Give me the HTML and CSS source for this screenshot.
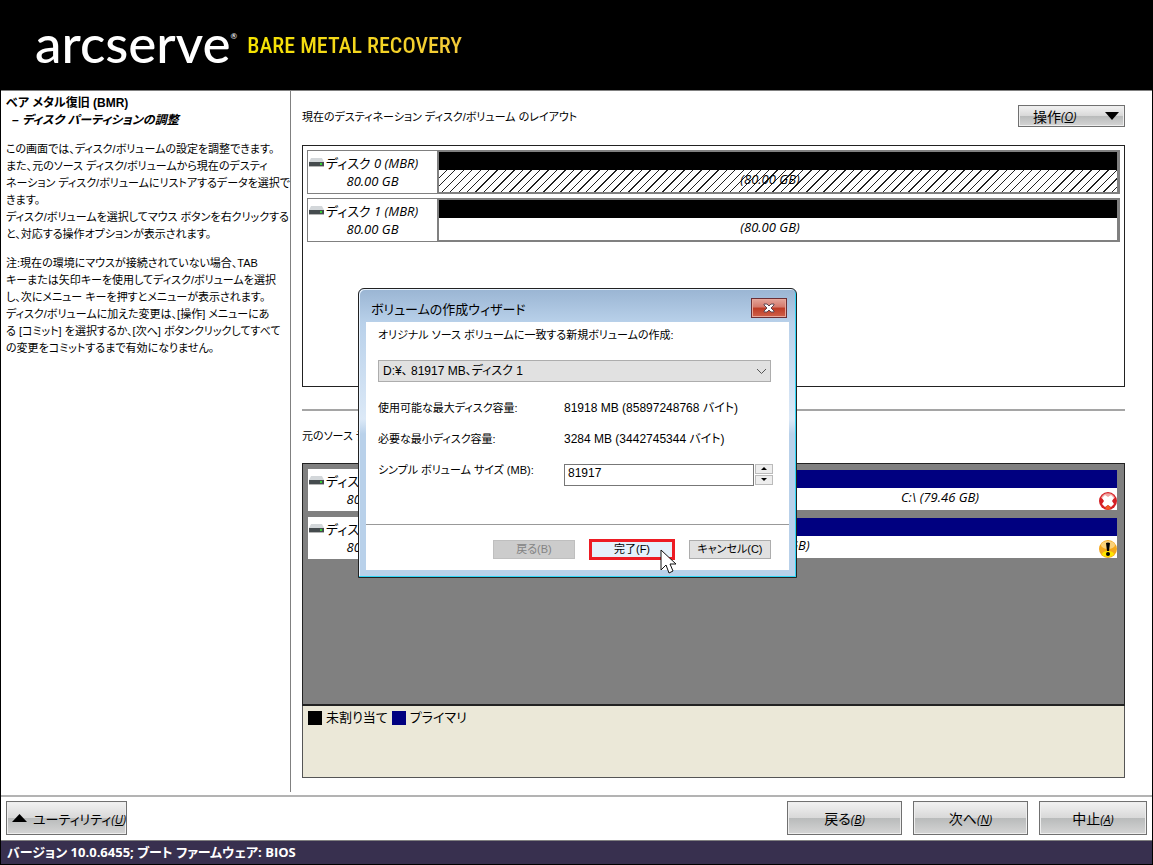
FILE: index.html
```html
<!DOCTYPE html>
<html lang="ja">
<head>
    <meta charset="UTF-8">
    <meta name="viewport" content="width=device-width, initial-scale=1.0">
    <title>Bare Metal Recovery</title>
    <link rel="stylesheet" href="styles.css">
</head>
<body>
    <div class="app">
        <header class="header">
            <span class="logo">arcserve<sup>®</sup></span>
            <h1 class="product">BARE METAL RECOVERY</h1>
        </header>

        <div class="content">
            <aside class="sidebar">
                <h2>ベア メタル復旧 (BMR)</h2>
                <h3>– ディスク パーティションの調整</h3>
                <p>この画面では、ディスク/ボリュームの設定を調整できます。<br>
                また、元のソース ディスク/ボリュームから現在のデスティ<br>
                ネーション ディスク/ボリュームにリストアするデータを選択で<br>
                きます。<br>
                ディスク/ボリュームを選択してマウス ボタンを右クリックする<br>
                と、対応する操作オプションが表示されます。</p>
                <p>注:現在の環境にマウスが接続されていない場合、TAB<br>
                キーまたは矢印キーを使用してディスク/ボリュームを選択<br>
                し、次にメニュー キーを押すとメニューが表示されます。<br>
                ディスク/ボリュームに加えた変更は、[操作] メニューにあ<br>
                る [コミット] を選択するか、[次へ] ボタンクリックしてすべて<br>
                の変更をコミットするまで有効になりません。</p>
            </aside>

            <main class="main">
                <div class="main-head">
                    <span>現在のデスティネーション ディスク/ボリューム のレイアウト</span>
                    <button class="btn btn-menu">操作<i>(<u>O</u>)</i>
                        <svg width="14" height="8" viewBox="0 0 14 8"><path d="M0 0h14L7 8z"/></svg>
                    </button>
                </div>

                <section class="panel">
                    <div class="disk">
                        <div class="disk-label">
                            <div class="disk-name">
                                <svg width="15" height="10" viewBox="0 0 15 10"><path d="M2 0h11l2 4H0z" fill="#d3d7da"/><path d="M0 4h15v4H0z" fill="#454b4e"/><path d="M0 8h15v1H0z" fill="#b5b5b5"/><path d="M11 5h2v2h-2z" fill="#35d232"/></svg>
                                <span>ディスク <i>0 (MBR)</i></span>
                            </div>
                            <div class="disk-size">80.00 GB</div>
                        </div>
                        <div class="volume selected">(80.00 GB)</div>
                    </div>
                    <div class="disk">
                        <div class="disk-label">
                            <div class="disk-name">
                                <svg width="15" height="10" viewBox="0 0 15 10"><path d="M2 0h11l2 4H0z" fill="#d3d7da"/><path d="M0 4h15v4H0z" fill="#454b4e"/><path d="M0 8h15v1H0z" fill="#b5b5b5"/><path d="M11 5h2v2h-2z" fill="#35d232"/></svg>
                                <span>ディスク <i>1 (MBR)</i></span>
                            </div>
                            <div class="disk-size">80.00 GB</div>
                        </div>
                        <div class="volume">(80.00 GB)</div>
                    </div>
                </section>

                <hr class="divider">

                <div class="source-title">元のソース ディスク/ボリューム</div>

                <section class="panel source">
                    <div class="disk">
                        <div class="disk-label">
                            <div class="disk-name">
                                <svg width="15" height="10" viewBox="0 0 15 10"><path d="M2 0h11l2 4H0z" fill="#d3d7da"/><path d="M0 4h15v4H0z" fill="#454b4e"/><path d="M0 8h15v1H0z" fill="#b5b5b5"/><path d="M11 5h2v2h-2z" fill="#35d232"/></svg>
                                <span>ディスク <i>0 (MBR)</i></span>
                            </div>
                            <div class="disk-size">80.00 GB</div>
                        </div>
                        <div class="volume primary small"></div>
                        <div class="volume primary">C:\ (79.46 GB)
                            <svg class="badge" width="18" height="18" viewBox="0 0 18 18"><circle cx="9" cy="9" r="9" fill="#d51f25"/><path d="M2 6a7.500 7.500 0 0 1 14 0Q9 9 2 6z" fill="#f0a5a2"/><path d="M6 3l3 2 3-2 3 3-2 3 2 3-3 3-3-2-3 2-3-3 2-3-2-3z" fill="#fff"/><path d="M6 16l3-3 3 3-3 2z" fill="#f15a24"/></svg>
                        </div>
                    </div>
                    <div class="disk">
                        <div class="disk-label">
                            <div class="disk-name">
                                <svg width="15" height="10" viewBox="0 0 15 10"><path d="M2 0h11l2 4H0z" fill="#d3d7da"/><path d="M0 4h15v4H0z" fill="#454b4e"/><path d="M0 8h15v1H0z" fill="#b5b5b5"/><path d="M11 5h2v2h-2z" fill="#35d232"/></svg>
                                <span>ディスク <i>1 (MBR)</i></span>
                            </div>
                            <div class="disk-size">80.00 GB</div>
                        </div>
                        <div class="volume primary">D:\ (80.00 GB)
                            <svg class="badge" width="18" height="18" viewBox="0 0 18 18"><circle cx="9" cy="9" r="9" fill="#f5a81c"/><ellipse cx="9" cy="5" rx="7" ry="4" fill="#fbd27a"/><ellipse cx="9" cy="14" rx="6" ry="3" fill="#ffe600"/><path d="M7 3q2-1 4 0l-1 8H8z"/><circle cx="9" cy="14" r="2"/></svg>
                        </div>
                    </div>
                </section>
                <div class="legend">
                    <span class="swatch"></span>未割り当て
                    <span class="swatch primary-swatch"></span>プライマリ
                </div>
            </main>
        </div>

        <footer class="toolbar">
            <button class="btn btn-util">
                <svg width="15" height="8" viewBox="0 0 15 8"><path d="M0 8h15L7.500 0z"/></svg>
                <span>ユーティリティ<i>(<u>U</u>)</i></span>
            </button>
            <div class="nav">
                <button class="btn">戻る<i>(<u>B</u>)</i></button>
                <button class="btn">次へ<i>(<u>N</u>)</i></button>
                <button class="btn btn-abort">中止<i>(<u>A</u>)</i></button>
            </div>
        </footer>
        <div class="status">バージョン 10.0.6455; ブート ファームウェア: BIOS</div>
    </div>

    <div class="dialog" role="dialog" aria-labelledby="dialogTitle">
        <div class="dialog-head">
            <span id="dialogTitle">ボリュームの作成ウィザード</span>
            <button class="close" aria-label="閉じる">
                <svg width="12" height="10" viewBox="0 0 12 10"><path d="M1 1h3l2 2 2-2h3v1L8 5l3 3v1H8L6 7 4 9H1V8l3-3-3-3z" fill="#fff" stroke="#5e4650"/></svg>
            </button>
        </div>
        <div class="dialog-body">
            <label for="volume">オリジナル ソース ボリュームに一致する新規ボリュームの作成:</label>
            <div class="select">
                <select id="volume">
                    <option>D:¥、 81917 MB、ディスク 1</option>
                </select>
                <svg width="11" height="7" viewBox="0 0 11 7"><path d="M1 1l4.500 4.500L10 1" fill="none" stroke="#555"/></svg>
            </div>
            <div class="fields">
                <span>使用可能な最大ディスク容量:</span>
                <span class="value">81918 MB (85897248768 バイト)</span>
                <span>必要な最小ディスク容量:</span>
                <span class="value">3284 MB (3442745344 バイト)</span>
                <label for="size">シンプル ボリューム サイズ (MB):</label>
                <div class="spinner">
                    <input type="text" id="size" value="81917">
                    <div class="spin-buttons">
                        <button aria-label="増やす"><svg width="6" height="3" viewBox="0 0 6 3"><path d="M0 3h6L3 0z"/></svg></button>
                        <button aria-label="減らす"><svg width="6" height="3" viewBox="0 0 6 3"><path d="M0 0h6L3 3z"/></svg></button>
                    </div>
                </div>
            </div>
            <div class="dialog-foot">
                <button disabled>戻る(B)</button>
                <div class="finish">
                    <button class="active">完了(F)</button>
                    <svg class="cursor" width="18" height="26" viewBox="0 0 18 26"><path d="M2 1v20l5-5 3 8 4-2-3-7h6z" fill="#fff" stroke="#111"/></svg>
                </div>
                <button>キャンセル(C)</button>
            </div>
        </div>
    </div>
</body>
</html>
```
FILE: styles.css
```css
* {
    box-sizing: border-box;
}

body {
    margin: 0;
    font-family: "Liberation Sans", "Noto Sans CJK JP", sans-serif;
    font-size: 11px;
    font-feature-settings: "palt";
    color: #000;
    background-color: #fff;
    white-space: nowrap;
}

button,
input,
select {
    font: inherit;
    font-feature-settings: inherit;
    color: inherit;
    margin: 0;
}

svg {
    flex-shrink: 0;
}

.app {
    display: flex;
    flex-direction: column;
    min-height: 100vh;
    border: 1px solid #000;
    border-top: none;
}

/* Header */
.header {
    display: flex;
    align-items: center;
    gap: 10px;
    height: 90px;
    padding: 0 0 4px 34px;
    background-color: #000;
}

.logo {
    font-family: Lato, sans-serif;
    font-size: 53px;
    font-weight: 500;
    line-height: 60px;
    color: #fff;
}

.logo sup {
    font-size: 8px;
    line-height: 8px;
    vertical-align: 24px;
}

.product {
    margin: 0;
    padding-top: 5px;
    font-family: "Roboto Condensed", "Open Sans Condensed", "Liberation Sans Narrow", "Liberation Sans", sans-serif;
    font-size: 22px;
    font-weight: 500;
    background: linear-gradient(90deg, #f5e400, #f3c93a);
    background-clip: text;
    color: transparent;
}

.content {
    display: flex;
    flex: 1;
    border-top: 1px solid #808080;
}

/* Sidebar */
.sidebar {
    width: 290px;
    margin-bottom: 3px;
    padding: 4px 0 4px 5px;
    border-right: 1px solid #808080;
    line-height: 17px;
}

.sidebar h2,
.sidebar h3 {
    margin: 0;
    font-size: 12px;
    line-height: 17px;
}

.sidebar h3 {
    padding-left: 6px;
    font-style: italic;
}

.sidebar p {
    margin: 12px 0;
}

/* Disk layout */
.main {
    flex: 1;
    display: flex;
    flex-direction: column;
    padding: 14px 27px 17px 11px;
}

.main-head {
    display: flex;
    justify-content: space-between;
    align-items: center;
    margin-bottom: 18px;
}

.btn {
    width: 115px;
    height: 34px;
    padding: 0;
    border: 1px solid #707070;
    box-shadow: inset 0 0 0 1px #eee;
    background: linear-gradient(#f2f2f2, #d8d8d8 50%, #b9bbbb 51%, #d5d5d5);
    font-family: "Open Sans", "Noto Sans CJK JP", sans-serif;
    font-size: 14px;
}

.btn i {
    font-size: 12px;
}

.btn-menu {
    display: flex;
    align-items: center;
    width: 107px;
    height: 22px;
    padding: 0 5px 0 14px;
}

.btn-menu svg {
    margin-left: auto;
}

.panel {
    flex: 1;
    display: flex;
    flex-direction: column;
    gap: 4px;
    padding: 4px;
    border: 1px solid #222;
    font-family: "Open Sans", "Noto Sans CJK JP", sans-serif;
    font-size: 13px;
}

.disk {
    display: flex;
    height: 44px;
    padding: 2px 3px 2px 0;
    background-color: #808080;
}

.disk-label {
    width: 129px;
    margin: -1px 2px -1px 1px;
    background-color: #fff;
    line-height: 18px;
    padding-top: 3px;
}

.disk-name {
    display: flex;
    align-items: center;
    gap: 2px;
    padding-left: 1px;
}

.disk-size {
    text-align: center;
    font-style: italic;
}

.volume {
    position: relative;
    flex: 1;
    padding-right: 16px;
    border-top: 18px solid #000;
    background-color: #fff;
    line-height: 18px;
    text-align: center;
    font-style: italic;
}

.volume.selected {
    background-image: repeating-linear-gradient(135deg, #fff 0, #fff 5px, #222 5px, #222 6px);
}

.divider {
    width: 100%;
    margin: 22px 0 17px;
    border: none;
    border-top: 2px solid #a5a5a5;
}

.source-title {
    margin-bottom: 19px;
    line-height: 16px;
}

.panel.source {
    background-color: #808080;
    border-bottom-width: 2px;
}

.volume.primary {
    border-top-color: #000080;
}

.volume.small {
    margin-right: 2px;
}

.badge {
    position: absolute;
    right: 0;
    bottom: 0;
}

.legend {
    display: flex;
    align-items: center;
    align-content: flex-start;
    flex-wrap: wrap;
    gap: 4px;
    height: 72px;
    padding: 4px 5px;
    border: 1px solid #555;
    border-top: none;
    background-color: #ebe8d8;
    font-size: 13px;
    line-height: 16px;
}

.swatch {
    width: 14px;
    height: 14px;
    background-color: #000;
}

.primary-swatch {
    background-color: #000080;
}

/* Bottom bar */
.toolbar {
    display: flex;
    justify-content: space-between;
    padding: 4px 5px 5px;
    border-top: 2px solid #b3b3b3;
}

.btn-util {
    display: flex;
    align-items: center;
    gap: 6px;
    width: 121px;
    padding-left: 5px;
    font-size: 13px;
}

.nav {
    display: flex;
    gap: 11px;
}

.btn-abort {
    width: 108px;
}

.status {
    height: 24px;
    padding-left: 6px;
    border-top: 1px solid #808080;
    background-color: #38304f;
    color: #fff;
    font-family: "Open Sans", "Noto Sans CJK JP", sans-serif;
    font-size: 13px;
    font-weight: bold;
    line-height: 22px;
}

/* Wizard */
.dialog {
    position: absolute;
    inset: 0 0 0 2px;
    margin: auto;
    width: 439px;
    height: fit-content;
    padding: 0 7px 7px;
    border: 1px solid #222;
    border-radius: 6px 6px 0 0;
    background: linear-gradient(#9ab5d3, #b9d1ea 34px, #dce9f7 130px, #b9d1ea 145px);
    box-shadow: inset -1px -1px #30d5f5, inset 1px 1px #e8f3ff;
}

.dialog-head {
    display: flex;
    justify-content: space-between;
    align-items: center;
    height: 33px;
    padding: 6px 2px 0 5px;
    font-size: 13px;
}

.close {
    display: flex;
    align-items: center;
    justify-content: center;
    width: 36px;
    height: 20px;
    padding: 0;
    border: 1px solid #6b2f35;
    box-shadow: inset 0 0 0 1px #e8a79a;
    background: linear-gradient(#e3a499, #d4796b 45%, #bd3a24 50%, #d0614a);
}

.dialog-body {
    background-color: #fff;
    height: 248px;
    padding: 5px 0 0;
    line-height: 16px;
}

.dialog-body > label {
    display: block;
    margin-left: 12px;
}

.select {
    position: relative;
    margin: 17px 18px 0 12px;
}

.select select {
    display: block;
    width: 100%;
    height: 22px;
    padding: 0 4px;
    appearance: none;
    border: 1px solid #adadad;
    border-radius: 0;
    background-color: #e1e1e1;
    font-size: 12px;
}

.select svg {
    position: absolute;
    right: 4px;
    top: 8px;
}

.fields {
    display: grid;
    grid-template-columns: 186px 1fr;
    row-gap: 15px;
    padding: 18px 16px 0 12px;
}

.fields .value {
    font-size: 12px;
}

.spinner {
    display: flex;
    gap: 1px;
    margin-top: 2px;
}

.spinner input {
    flex: 1;
    min-width: 0;
    height: 22px;
    padding: 0 3px 3px;
    border: 1px solid #777;
    font-size: 12px;
}

.spin-buttons {
    display: flex;
    flex-direction: column;
    gap: 1px;
}

.spin-buttons button {
    display: flex;
    align-items: center;
    justify-content: center;
    width: 18px;
    height: 10px;
    padding: 0;
    border: 1px solid #bbb;
    background-color: #eee;
}

.dialog-foot {
    display: flex;
    justify-content: flex-end;
    align-items: center;
    gap: 14px;
    margin-top: 38px;
    padding: 14px 18px 0 0;
    border-top: 1px solid #999;
}

.dialog-foot button {
    width: 82px;
    height: 19px;
    padding: 0;
    border: 1px solid #adadad;
    background-color: #e1e1e1;
    line-height: 16px;
}

.dialog-foot button:disabled {
    border-color: #bfbfbf;
    background-color: #ccc;
    color: #838383;
}

.finish {
    position: relative;
}

.dialog-foot .active {
    width: 86px;
    height: 21px;
    border: 3px solid #ed1c24;
    background-color: #e5f1fb;
    line-height: 14px;
}

.cursor {
    position: absolute;
    left: 70px;
    top: 10px;
}
```
